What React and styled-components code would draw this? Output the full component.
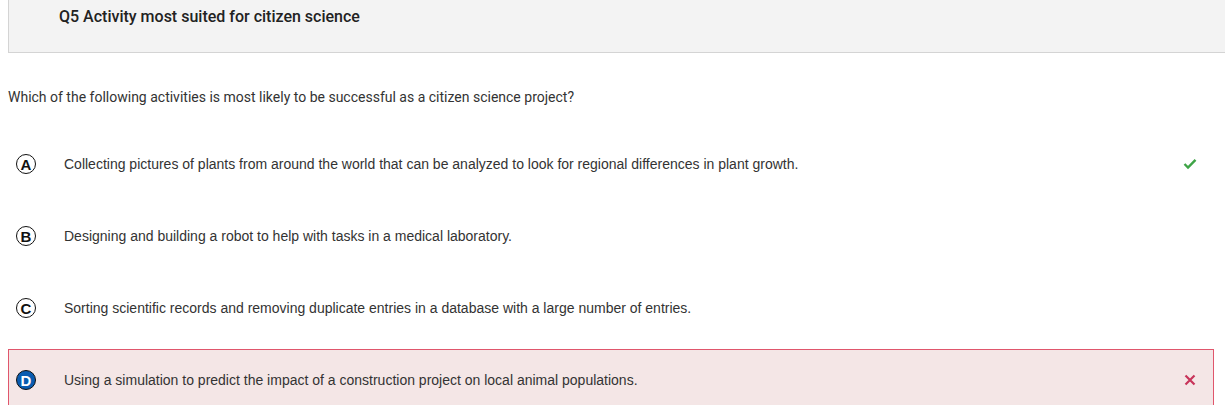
import styled, { createGlobalStyle } from "styled-components";

const GlobalStyle = createGlobalStyle`
  body {
    margin: 0;
    background: #ffffff;
    font-family: Roboto, "Liberation Sans", Arial, sans-serif;
  }
`;

const Page = styled.div`
  width: 1225px;
  height: 405px;
  overflow: hidden;
`;

const Header = styled.div`
  margin-left: 8px;
  height: 52px;
  background: #f3f3f3;
  border-left: 1px solid #d4d4d4;
  border-bottom: 1px solid #d4d4d4;
  display: flex;
  align-items: flex-start;
  padding-left: 50px;
`;

const Title = styled.h2`
  margin: 7px 0 0;
  font-family: Roboto, "Liberation Sans", sans-serif;
  font-weight: 500;
  font-size: 16px;
  line-height: 19px;
  color: #222222;
`;

const Question = styled.p`
  margin: 36px 0 0 8px;
  font-family: Roboto, "Liberation Sans", sans-serif;
  font-size: 14px;
  line-height: 16px;
  color: #333333;
`;

const Options = styled.div`
  margin: 28px 0 0 8px;
  width: 1206px;
  display: flex;
  flex-direction: column;
  gap: 10px;
`;

const Option = styled.div`
  height: 60px;
  display: flex;
  align-items: center;
  padding: 0 16px 0 7px;
  border: 1px solid ${(p) => (p.$wrong ? "#e0566c" : "transparent")};
  background: ${(p) => (p.$wrong ? "#f4e6e6" : "transparent")};
`;

const Letter = styled.span`
  flex: none;
  width: 18px;
  height: 18px;
  border-radius: 50%;
  border: 1.5px solid #111111;
  display: flex;
  align-items: center;
  justify-content: center;
  font-family: "Liberation Sans", Arial, sans-serif;
  font-weight: 700;
  font-size: 15px;
  line-height: 1;
  color: ${(p) => (p.$selected ? "#ffffff" : "#111111")};
  background: ${(p) => (p.$selected ? "#0a5cb0" : "transparent")};
`;

const OptionText = styled.span`
  flex: 1;
  margin-left: 28px;
  font-family: "Liberation Sans", Arial, sans-serif;
  font-size: 14px;
  color: #333333;
`;

const Mark = styled.span`
  flex: none;
  width: 14px;
  height: 14px;
  display: flex;
  align-items: center;
  justify-content: center;
`;

const Check = () => (
  <svg width="14" height="12" viewBox="0 0 14 12">
    <path d="M1.5 6 L5 9.5 L12.5 1.8" fill="none" stroke="#3ea446" strokeWidth="2.4" />
  </svg>
);

const Cross = () => (
  <svg width="12" height="12" viewBox="0 0 12 12">
    <path d="M1.5 1.5 L10.5 10.5 M10.5 1.5 L1.5 10.5" fill="none" stroke="#c8345a" strokeWidth="2.2" />
  </svg>
);

const options = [
  {
    id: "A",
    text: "Collecting pictures of plants from around the world that can be analyzed to look for regional differences in plant growth.",
    correct: true,
  },
  { id: "B", text: "Designing and building a robot to help with tasks in a medical laboratory." },
  { id: "C", text: "Sorting scientific records and removing duplicate entries in a database with a large number of entries." },
  {
    id: "D",
    text: "Using a simulation to predict the impact of a construction project on local animal populations.",
    selected: true,
    wrong: true,
  },
];

export default function App() {
  return (
    <Page>
      <GlobalStyle />
      <Header>
        <Title>Q5 Activity most suited for citizen science</Title>
      </Header>
      <Question>Which of the following activities is most likely to be successful as a citizen science project?</Question>
      <Options>
        {options.map((o) => (
          <Option key={o.id} $wrong={o.wrong}>
            <Letter $selected={o.selected}>{o.id}</Letter>
            <OptionText>{o.text}</OptionText>
            <Mark>{o.correct ? <Check /> : o.wrong ? <Cross /> : null}</Mark>
          </Option>
        ))}
      </Options>
    </Page>
  );
}
